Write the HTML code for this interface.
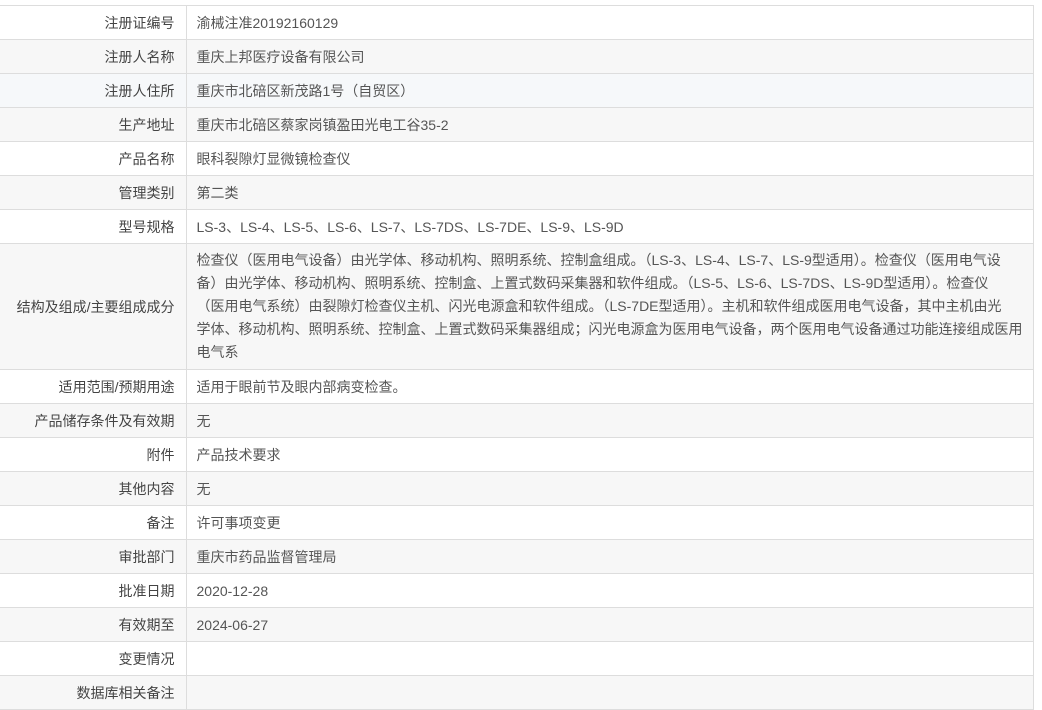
<!DOCTYPE html>
<html><head><meta charset="utf-8"><style>
html,body{margin:0;padding:0;background:#fff;width:1042px;height:704px;overflow:hidden}
table{position:absolute;left:0;top:5px;width:1034px;border-collapse:collapse;font-family:"Liberation Sans","Noto Sans CJK SC",sans-serif;font-size:14px;color:#555}
td{border:1px solid #ddd;height:34px;padding:0;box-sizing:border-box}
td.l{width:186px;text-align:right;padding-right:11px;color:#444;border-left:none}
td.v{padding-left:10px}
tr:nth-child(even) td{background:#f7f7f7}
tr.h td{background:#f6f8fa}
td.m{padding:4px 10px;line-height:23px;white-space:nowrap;height:126px}
</style></head><body>
<table>
<tr><td class="l">注册证编号</td><td class="v">渝械注准20192160129</td></tr>
<tr><td class="l">注册人名称</td><td class="v">重庆上邦医疗设备有限公司</td></tr>
<tr class="h"><td class="l">注册人住所</td><td class="v">重庆市北碚区新茂路1号（自贸区）</td></tr>
<tr><td class="l">生产地址</td><td class="v">重庆市北碚区蔡家岗镇盈田光电工谷35-2</td></tr>
<tr><td class="l">产品名称</td><td class="v">眼科裂隙灯显微镜检查仪</td></tr>
<tr><td class="l">管理类别</td><td class="v">第二类</td></tr>
<tr><td class="l">型号规格</td><td class="v">LS-3、LS-4、LS-5、LS-6、LS-7、LS-7DS、LS-7DE、LS-9、LS-9D</td></tr>
<tr><td class="l" style="height:126px">结构及组成/主要组成成分</td><td class="m">检查仪（医用电气设备）由光学体、移动机构、照明系统、控制盒组成。（LS-3、LS-4、LS-7、LS-9型适用）。检查仪（医用电气设<br>备）由光学体、移动机构、照明系统、控制盒、上置式数码采集器和软件组成。（LS-5、LS-6、LS-7DS、LS-9D型适用）。检查仪<br>（医用电气系统）由裂隙灯检查仪主机、闪光电源盒和软件组成。（LS-7DE型适用）。主机和软件组成医用电气设备，其中主机由光<br>学体、移动机构、照明系统、控制盒、上置式数码采集器组成；闪光电源盒为医用电气设备，两个医用电气设备通过功能连接组成医用<br>电气系</td></tr>
<tr><td class="l">适用范围/预期用途</td><td class="v">适用于眼前节及眼内部病变检查。</td></tr>
<tr><td class="l">产品储存条件及有效期</td><td class="v">无</td></tr>
<tr><td class="l">附件</td><td class="v">产品技术要求</td></tr>
<tr><td class="l">其他内容</td><td class="v">无</td></tr>
<tr><td class="l">备注</td><td class="v">许可事项变更</td></tr>
<tr><td class="l">审批部门</td><td class="v">重庆市药品监督管理局</td></tr>
<tr><td class="l">批准日期</td><td class="v">2020-12-28</td></tr>
<tr><td class="l">有效期至</td><td class="v">2024-06-27</td></tr>
<tr><td class="l">变更情况</td><td class="v"></td></tr>
<tr><td class="l">数据库相关备注</td><td class="v"></td></tr>
</table>
</body></html>
